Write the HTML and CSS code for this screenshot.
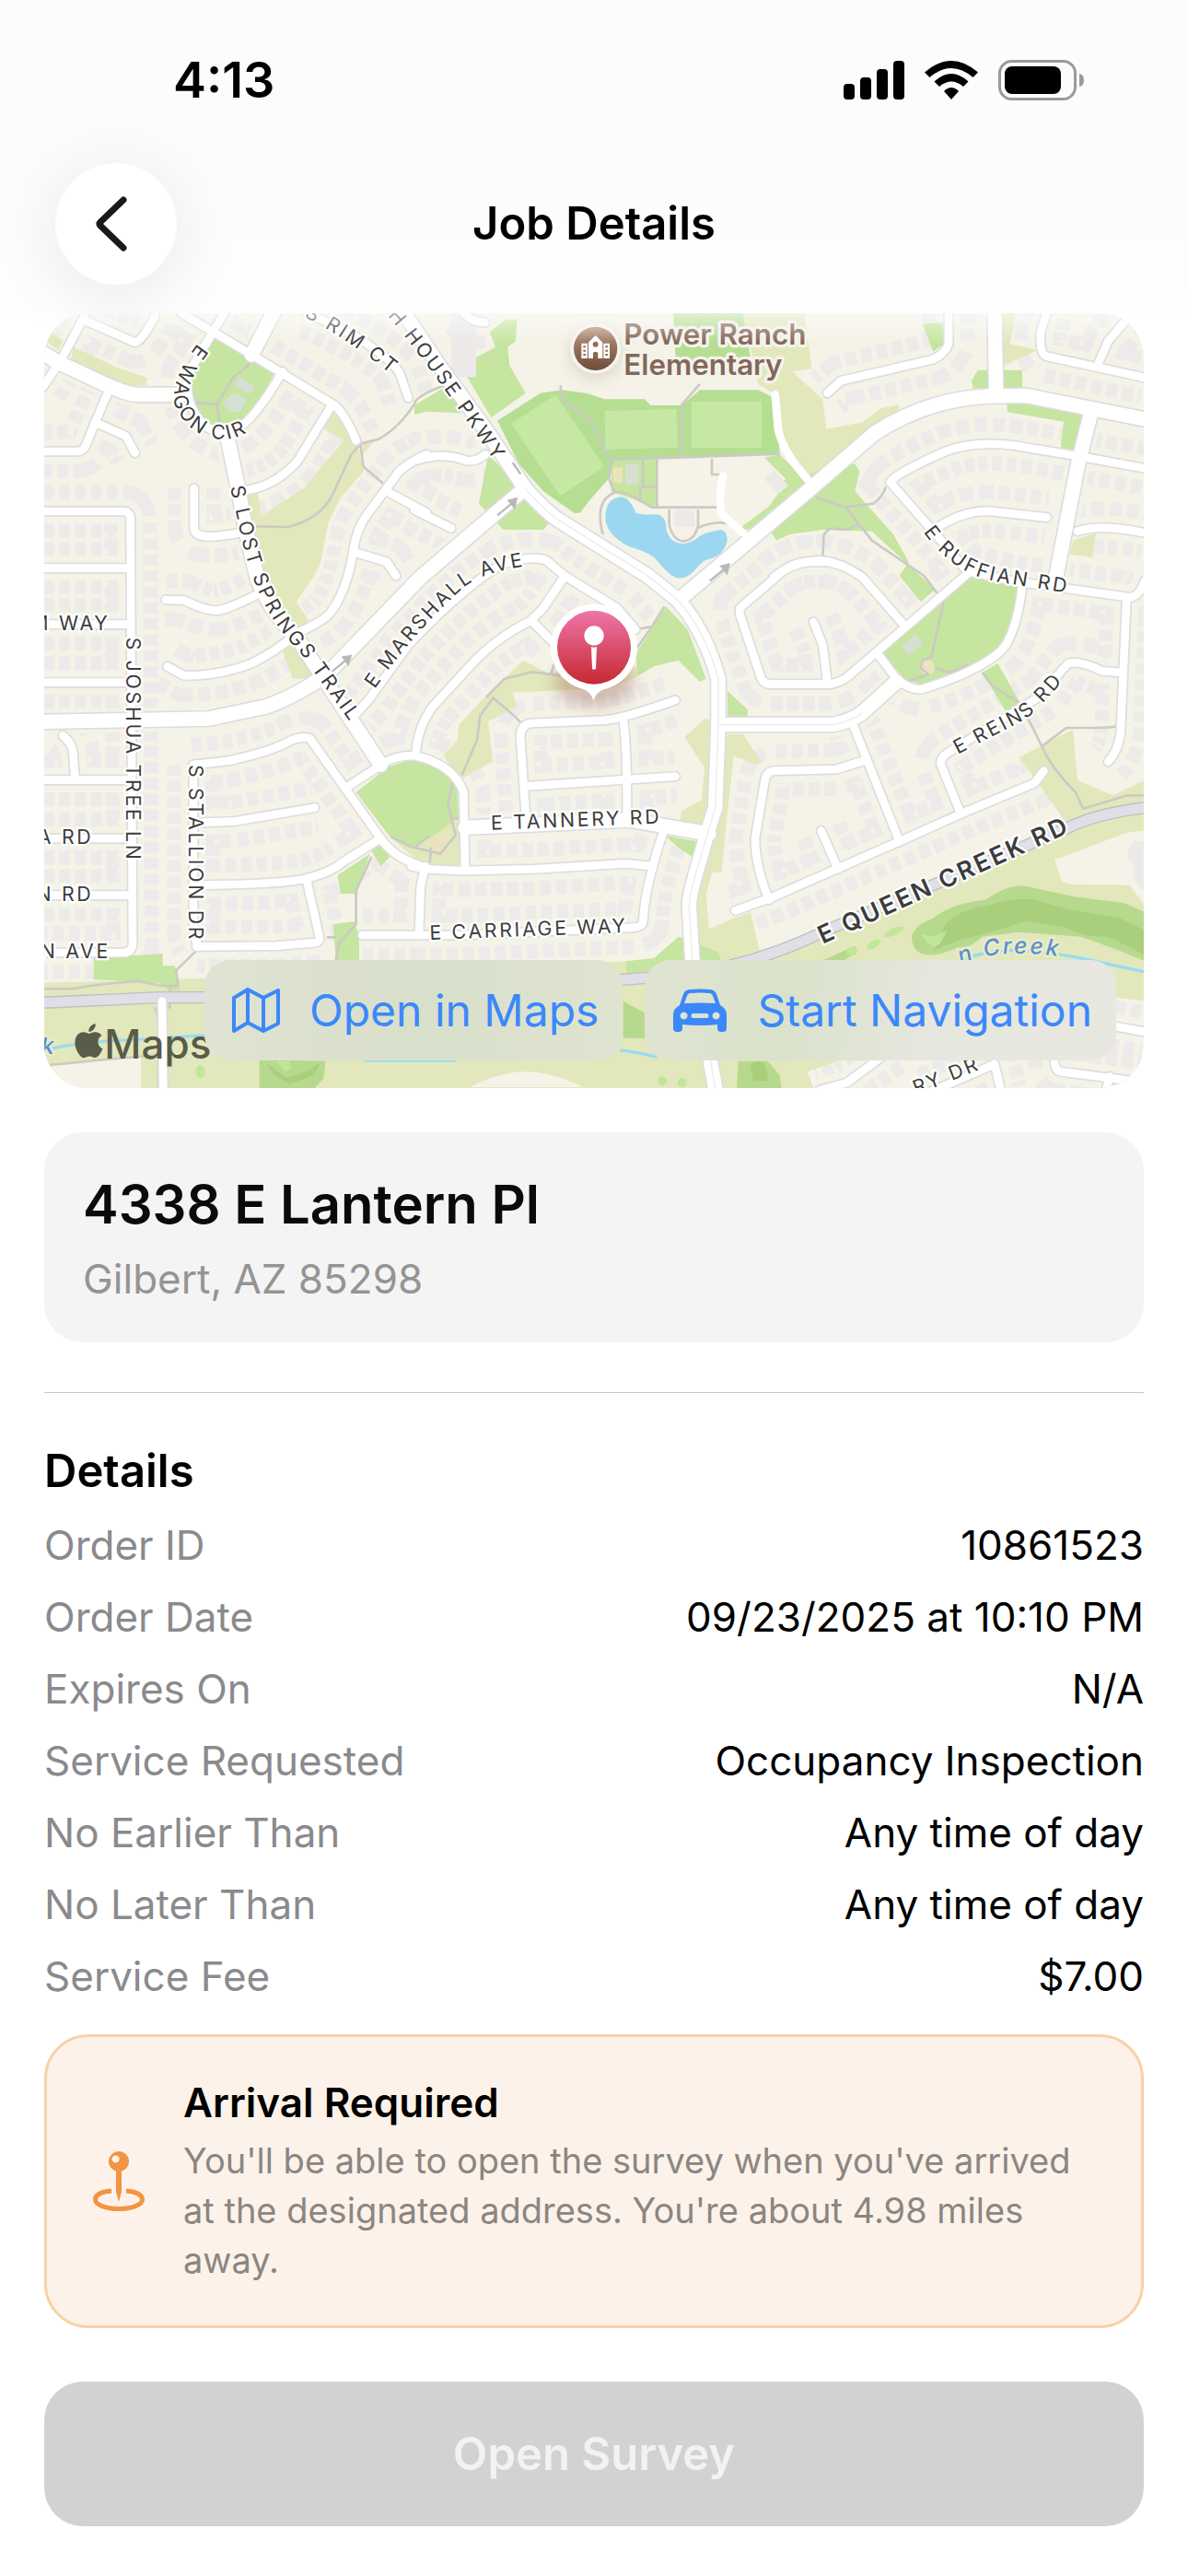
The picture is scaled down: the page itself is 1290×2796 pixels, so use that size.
FILE: index.html
```html
<!DOCTYPE html>
<html lang="en">
  <head>
    <meta charset="utf-8">
    <meta name="viewport" content="width=device-width">
    <title>Job Details</title>
    <link rel="stylesheet" href="styles.css">
  </head>
  <body>
    <div class="status-bar">
      <span class="time">4:13</span>
      <div class="status-icons">
        <svg width="66" height="42" viewBox="0 0 66 42">
          <rect x="0" y="25" width="12" height="17" rx="4"/>
          <rect x="18" y="18" width="12" height="24" rx="4"/>
          <rect x="36" y="9" width="12" height="33" rx="4"/>
          <rect x="54" y="0" width="12" height="42" rx="4"/>
        </svg>
        <svg width="58" height="42" viewBox="0 0 58 42">
          <path d="M29 42 21 33q8-8 16 0z"/>
          <path d="M10.500 22.500Q29 5.500 47.500 22.500L42 28Q29 17 16 28z"/>
          <path d="M0 12.500Q29-12.500 58 12.500L52.500 18Q29-2 5.500 18z"/>
        </svg>
        <svg width="94" height="44" viewBox="0 0 94 44">
          <rect x="1.500" y="1.500" width="82" height="41" rx="13" fill="none" stroke="#9a9a9a" stroke-width="3"/>
          <rect x="7" y="7" width="61" height="30" rx="8"/>
          <path d="M88 15q5 1 5 7t-5 7z" fill="#9a9a9a"/>
        </svg>
      </div>
    </div>
    <header class="nav-bar">
      <button class="back" aria-label="Back">
        <svg width="36" height="60" viewBox="0 0 36 60">
          <path d="M31 4 6 28q-2 2 0 4l25 24" fill="none" stroke="#1a1a1a" stroke-width="7" stroke-linecap="round"/>
        </svg>
      </button>
      <h1>Job Details</h1>
    </header>

    <main>
      <section class="map">
        <svg class="map-canvas" viewBox="0 0 3582 2523" preserveAspectRatio="xMidYMid slice">
          <defs>
            <linearGradient id="pinFill" x1="0" y1="0" x2="0" y2="1">
              <stop offset="0" stop-color="#ee76a8"/>
              <stop offset="1" stop-color="#c62832"/>
            </linearGradient>
            <linearGradient id="schoolFill" x1="0" y1="0" x2="0" y2="1">
              <stop offset="0" stop-color="#b8967a"/>
              <stop offset="1" stop-color="#6d4c3a"/>
            </linearGradient>
            <filter id="soft" x="-50%" y="-50%" width="200%" height="200%">
              <feGaussianBlur stdDeviation="26"/>
            </filter>

            <!-- small residential streets -->
            <g id="streets">
              <g transform="translate(-24 -30)">
                <path d="M20 270 80 180 155 40"/>
                <path d="M150 50 320 125Q340 125 385 40"/>
                <path d="M470 30 700 165 970 330Q1005 360 1040 445"/>
                <path d="M610 30 490 230Q480 380 600 425Q680 430 800 220"/>
                <path d="M235 280 190 385 160 460Q150 480 130 480H20"/>
                <path d="M190 385 290 430 320 485"/>
                <path d="M690 605Q780 590 850 510L960 330"/>
                <path d="M512 600V730Q515 757 560 757Q600 757 660 745"/>
                <path d="M20 675H280Q305 675 305 700L312 2080Q312 2112 280 2112H20"/>
                <path d="M20 860H300M20 1043H300M20 1232H300"/>
                <path d="M420 963 480 965Q550 1000 590 998Q630 990 710 950"/>
                <path d="M425 1180 480 1210Q600 1210 700 1170Q780 1130 850 1070Q940 1030 960 1000Q1010 930 1030 810Q1040 730 1080 680L1180 545Q1220 510 1270 490"/>
                <path d="M1040 810 1140 840 1170 885"/>
                <path d="M1140 610 1270 680"/>
                <path d="M880 30Q1100 120 1180 220L1210 305"/>
              </g>
              <g transform="translate(1206 -30)">
                <path d="M720 1060 660 990 490 885 430 835Q380 815 280 850Q150 930-20 1110L-150 1290-195 1340"/>
                <path d="M0 510Q90 480 170 510Q200 515 230 490"/>
                <path d="M0 670 120 730"/>
                <path d="M160 30Q190 60 230 60"/>
                <path d="M490 885 420 990 380 1030Q260 1090 180 1180L60 1310Q10 1380 5 1460"/>
                <path d="M380 1030 450 1100"/>
                <path d="M1350 840 1270 840Q1220 850 1200 870L1060 990V1010L1130 1220Q1140 1238 1160 1238H1350"/>
              </g>
              <g transform="translate(2376 -30)">
                <path d="M0 890Q60 840 150 835Q220 840 290 890L420 1040"/>
                <path d="M-10 1238H180Q210 1235 240 1215L630 880"/>
                <path d="M130 1035 160 1110 175 1230"/>
                <path d="M570 30V130Q560 160 520 180L220 250 175 290"/>
                <path d="M890 30 870 90Q865 165 890 170L1210 240"/>
                <path d="M1160 40 1090 120 1055 200"/>
                <path d="M1210 535 990 495 780 460Q650 445 560 480Q400 550 380 580L520 740 630 870 800 905 1160 955Q1190 955 1210 900"/>
                <path d="M530 730Q620 670 710 675L890 695"/>
                <path d="M990 740Q1060 715 1210 745"/>
                <path d="M1150 960 1130 1400Q1120 1460 1090 1490"/>
                <path d="M1135 1200 1070 1195Q1000 1160 960 1170Q930 1200 880 1270L570 1460Q540 1480 545 1500L610 1660"/>
                <path d="M810 920Q790 1080 740 1130Q660 1200 480 1255Q440 1255 400 1220L340 1140"/>
              </g>
              <g transform="translate(-24 1230)">
                <path d="M20 290H300"/>
                <path d="M85 145Q115 170 118 200L125 290"/>
                <path d="M20 480H300M20 665H300"/>
                <path d="M510 240 620 228Q760 200 830 160Q870 145 890 155L1120 480Q1160 540 1250 570"/>
                <path d="M510 240V790L525 832"/>
                <path d="M540 428 640 425 905 380"/>
                <path d="M510 632Q800 630 880 610Q960 590 1000 555L1120 480"/>
                <path d="M880 620 920 800Q925 818 900 820L780 830 520 832"/>
                <path d="M1015 310 1130 235Q1170 210 1230 210"/>
                <path d="M1060 795H1260M1265 570 1250 640 1245 790"/>
                <path d="M408 1010 412 1300"/>
              </g>
              <g transform="translate(1206 1230)">
                <path d="M0 210Q130 240 160 330L165 580"/>
                <path d="M-10 570Q20 582 160 585L390 580 690 562 770 570"/>
                <path d="M0 795H150L720 770Q745 765 745 750Q750 640 810 460"/>
                <path d="M365 440 345 150Q345 110 380 105L620 95Q680 90 850 30"/>
                <path d="M680 90Q695 200 692 420"/>
                <path d="M365 310 850 278"/>
              </g>
              <g transform="translate(2376 1230)">
                <path d="M255 100 410 490"/>
                <path d="M300 225 205 255 0 260Q-25 262-30 300L-60 480Q-60 570-15 680"/>
                <path d="M-125 715 0 670 410 490 610 400 850 300 880 260"/>
                <path d="M155 455 210 580"/>
                <path d="M380 1170 240 1275 150 1300"/>
                <path d="M500 1310 720 1215 740 1300"/>
                <path d="M915 1180Q910 1240 940 1240L1210 1275M1095 1255 1080 1310"/>
                <path d="M1100 1090 1210 1110"/>
              </g>
            </g>

            <!-- collector roads -->
            <g id="avenues">
              <path d="M-4 130 46 160 206 235Q276 265 306 265H446"/>
              <path d="M746 0 676 135"/>
              <path d="M596 400 636 590Q656 720 696 870Q736 970 826 1060L1096 1470"/>
              <path d="M1566 570 1226 860 936 1160Q856 1230 726 1280L536 1320-4 1330"/>
              <path d="M1166-10 1286 170 1446 390 1566 570Q1636 650 1686 680L1966 855 2066 935Q2156 1040 2196 1190V1340L2186 1610 2161 1690 2121 1830Q2101 1900 2101 1930L2111 2100 2186 2523"/>
              <path d="M2066 935 2486 580 2706 390Q2876 280 3076 270L3196 268 3586 345"/>
              <path d="M3096 0 3101 260"/>
              <path d="M3411 320 3366 500 3296 860"/>
              <path d="M1371 1675 1906 1650 2166 1695"/>
              <path d="M2196 1340H2566Q2626 1330 2666 1300L2776 1200"/>
            </g>
          </defs>

          <rect width="3582" height="2523" fill="#f5f3e7"/>

          <!-- houses on both sides of every street -->
          <use href="#streets" class="houses"/>
          <use href="#streets" class="kerb"/>
          <use href="#avenues" class="kerb"/>

          <g class="grass-dry">
            <path d="M0 2180 530 2165 1900 2110 2376 2100 2950 1860 3316 1640 3176 1445 3351 1355 3366 1520 3481 1570 3586 1520V2240L3256 2200 2486 2470 2506 2523H0z"/>
            <path d="M6 50 61 90 46 120 6 90zM96 110 246 180 336 210 331 235H266L86 155z"/>
            <path d="M976 415 846 570 706 660 696 585 661 590 691 850 756 960 826 1040 861 1000 821 940 876 860 901 810 926 680 966 600 1041 515 1021 420 941 320 911 375zM776 1100 826 1060 880 1190 810 1190z"/>
            <path d="M2276 0H2476L2501 180 2436 190 2536 280 2548 377 2666 355 2726 310 2781 298 2791 325 2636 440 2506 540 2416 450 2390 270 2326 230z"/>
            <path d="M3121 0H3166L3146 100 3236 120 3126 170zM3351 740 3426 715 3416 795 3341 785z"/>
            <path d="M1426 1260 1561 1130 1636 1170 1936 1150V1180L1846 1220 1526 1235 1540 1280 1446 1330 1461 1460 1350 1520 1301 1440 1346 1390 1351 1340z"/>
            <path d="M1306 1670 1356 1640V1800L1226 1790 1126 1705 1206 1740z"/>
            <path d="M2151 1320 2196 1330 2186 1610 2126 1710 2071 1660 2076 1620 2141 1585 2151 1480 2086 1380zM2226 1370H2276L2336 1460 2316 1470 2246 1440 2206 1820H2176L2156 1890 2166 2005 2246 1970 2301 1950 2331 2080 2136 2160 2086 2100 2106 1930z"/>
          </g>

          <g class="grass">
            <path d="M556 70 751 190 676 350 586 380 476 340 456 220z"/>
            <path d="M1451 60 1506 20H1541L1536 90 1510 110 1516 170 1568 260 1456 340 1356 170 1470 110z"/>
            <path d="M1206 300 1306 240 1386 280 1356 325 1246 320 1206 330z"/>
            <path d="M1446 460 1556 570 1646 680 1626 705H1496L1416 620z"/>
            <path d="M1851 480 1996 475 1991 630 1846 580zM2396 460 2466 530 2641 490 2656 515 2641 580 2766 720 2816 810 2786 855 2856 940 2901 900 2816 820 2696 710 2536 705 2426 720 2386 740 2346 680 2276 710 2266 680 2356 620 2366 570 2416 540 2346 470z"/>
            <path d="M2026 955 2096 1030 2156 1190 2136 1200 2066 1130 1986 1150 1936 1180 1926 1110z"/>
            <path d="M2861 35 2926 30 2931 100 2896 125zM3021 220 3041 185H3186L3186 245H3026zM3136 295 3276 300 3381 325 3361 450 3311 438 3321 353 3138 322z"/>
            <path d="M3016 850 3176 890 3156 1020 3096 1110 2866 1210 2806 1195 2726 1100zM3056 1170 3106 1140 3191 1290 3146 1320z"/>
            <path d="M1016 1560 1116 1480 1236 1440Q1330 1460 1346 1560L1350 1640 1300 1680 1206 1740 1126 1705z"/>
            <path d="M161 2100 386 2085V2125H426L441 2205H406L376 2180 161 2170zM956 1830 1061 1760 1016 1890H966zM941 1990 1011 1980 1026 2030V2110H951zM1066 1750 1096 1730 1126 1770 1096 1800z"/>
            <path d="M2021 1700 2126 1720 2111 1770 2066 1740zM2226 1230 2291 1290V1315H2226zM1986 2100 2066 2030 2196 2080 2206 2110 1896 2150V2110z"/>
          </g>

          <g class="grass-school">
            <path d="M1476 350 1616 260 1686 250 1766 260 1826 280H1956L1976 300H2076L2136 250H2326L2386 280 2396 460 1856 475 1846 530 1776 610 1746 650H1726L1626 580 1546 490z"/>
            <path d="M2049 0H2276L2300 140 2200 200H2060z"/>
          </g>
          <g class="pitch">
            <path d="M1521 360 1666 265 1824 500 1681 595zM1826 318 2060 312 2063 437 1828 443zM2109 288H2337V438H2109z"/>
          </g>

          <g class="golf">
            <path d="M2826 2030Q2836 1990 2896 1970Q2956 1920 3066 1910Q3136 1860 3196 1865L3356 1900 3516 1920 3586 1950V2110Q3496 2070 3376 2030L3176 2015 3056 2030Q3016 2070 2976 2065Q2906 2100 2856 2085Q2826 2070 2826 2030z"/>
            <path d="M701 2430 916 2435 911 2490 881 2523H701zM2261 2435H2356L2396 2480 2401 2523H2256zM1886 2240 1961 2280V2360H1886zM2530 2110 2640 2060 2650 2080 2600 2110z"/>
          </g>
          <g class="golf-dark">
            <path d="M2936 1990Q2976 1940 3076 1930Q3156 1900 3226 1910L3336 1940 3506 1970 3586 2010V2090L3466 2030Q3376 2030 3326 2000L3196 1980Q3076 2020 2986 2040Q2936 2060 2896 2075z"/>
            <path d="M720 2440 790 2490 850 2470 900 2440 880 2480 800 2510 750 2480zM2300 2450Q2330 2420 2350 2450L2360 2500H2310z"/>
          </g>
          <g class="golf-light">
            <path d="M2856 2020 2896 2030 2941 2010 2921 2050 2901 2065 2876 2050zM755 2435H800L805 2460 785 2470z"/>
            <ellipse cx="508" cy="2470" rx="15" ry="21"/>
            <circle cx="2014" cy="2500" r="15"/>
            <circle cx="2078" cy="2505" r="15"/>
            <ellipse cx="2630" cy="2078" rx="18" ry="14"/>
            <ellipse cx="2702" cy="2055" rx="24" ry="12" transform="rotate(-30 2702 2055)"/>
            <ellipse cx="2768" cy="2014" rx="34" ry="11" transform="rotate(-25 2768 2014)"/>
          </g>

          <g fill="#f5f3e7">
            <path d="M0 2450 316 2420V2523H0zM1386 2520Q1486 2470 1566 2470Q1656 2470 1756 2520zM3291 1780 3531 1690 3586 1685V1930L3536 1862 3346 1860 3316 1850z"/>
            <path d="M2000 475H2340L2410 560 2360 630 2266 700 2190 640H2000z"/>
          </g>

          <path class="water" d="M1828 660Q1831 600 1881 598Q1906 600 1928 650Q1941 657 1996 655Q2026 660 2026 700Q2036 750 2081 750Q2111 748 2136 725Q2166 710 2206 705Q2231 715 2223 750Q2211 785 2176 798Q2146 800 2116 840Q2086 870 2056 860Q2031 850 1996 805Q1976 780 1906 760Q1826 720 1828 660z"/>
          <g class="creek">
            <path d="M2976 2110Q3076 2070 3176 2075Q3276 2080 3376 2100L3586 2145"/>
            <path d="M-4 2400Q126 2370 306 2365L536 2350M1040 2433H1340M1876 2400 1916 2405 1996 2421"/>
          </g>

          <g fill="#ebeae9">
            <path d="M1326 0H1407V208H1326zM2053 640H2118V696H2053zM2346 540 2375 510 2424 560 2390 590zM3530 1750 3548 1718H3582V1880L3548 1840V1790L3530 1780z"/>
          </g>
          <g class="courts">
            <path d="M634 205 686 238 670 265 618 235zM580 290 618 258 662 280 640 322 600 318z"/>
            <path d="M1893 493H1936V557H1893zM2791 1085 2837 1045 2863 1073 2817 1115z"/>
          </g>
          <g fill="#ebe3bf">
            <path d="M1854 502H1884V551H1854zM1036 425 1076 415 1040 460z"/>
            <circle cx="2878" cy="1153" r="24"/>
            <circle cx="1291" cy="1727" r="34"/>
          </g>

          <g class="trail">
            <path d="M674 145 664 170 614 210 562 298 490 290M562 298 576 370"/>
            <path d="M684 694 794 696Q900 670 940 590L1000 460 1030 425 1090 410Q1160 370 1210 290M1030 425 1040 500 1105 555"/>
            <path d="M1206 290Q1230 260 1306 235M1683 235V265Q1700 300 1740 320Q1790 350 1808 400L1826 450 1856 477 2396 458M2136 230 2077 298V470M1856 477Q1820 520 1860 583Q1900 580 1930 605L1980 632H2200M1860 583Q1790 610 1820 720M1996 475V630M1950 475V565H1996M1942 565V610M2036 640V690Q2050 740 2081 742Q2120 740 2130 690V640M2130 698Q2200 670 2240 690M2175 475V525H2220"/>
            <path d="M2516 600 2612 632 2700 620Q2730 600 2742 565M2612 632 2696 740 2866 855 2930 940 2890 1120M2536 795 2540 720 2560 700 2620 705 2655 685M2890 1120 2860 1130 2856 1155 2880 1175 2810 1200M2900 1155 2950 1170 3010 1145M3056 1170 3090 1215 3180 1270 3250 1410Q3280 1480 3360 1560L3384 1613 3530 1570H3582M3250 1410 3330 1350 3450 1350 3500 1345"/>
            <path d="M1440 1250 1500 1190 1590 1168 1680 1180M1650 1175 1670 1120M1926 1030 1980 1020 1910 1120M2020 955 1980 1020M1465 1250 1420 1310 1410 1390 1360 1505M1460 1250 1530 1310 1550 1330M1330 1530 1315 1600 1340 1700 1290 1760 1206 1740 1256 1700M1260 1740 1256 1790M1326 1645H1350"/>
            <path d="M1066 1770 1016 1880V1990L960 2050 950 2110M920 2032H950M496 2075 430 2140 436 2190H380L310 2175Q200 2180 90 2200H0M1130 1705 1200 1740"/>
            <path d="M0 2450 200 2430 370 2415M372 2523V2290L360 2260M410 2200V2260H380"/>
          </g>

          <path class="creek-road-edge" d="M3586 1610Q3426 1630 3336 1675L2546 2010Q2326 2120 2076 2155Q1776 2180 1376 2210L596 2228H376L-4 2245"/>
          <path class="creek-road" d="M3586 1610Q3426 1630 3336 1675L2546 2010Q2326 2120 2076 2155Q1776 2180 1376 2210L596 2228H376L-4 2245"/>

          <use href="#streets" class="road edge"/>
          <use href="#avenues" class="road wide edge"/>
          <use href="#streets" class="road"/>
          <use href="#avenues" class="road wide"/>
          <g class="driveway">
            <path d="M2381 265 2391 380Q2406 450 2486 540M2211 530Q2196 590 2206 655L2276 715"/>
          </g>
          <path class="median" d="M1566 570Q1636 650 1686 680L1966 855 2066 935Q2156 1040 2196 1190V1340L2186 1610 2121 1830Q2101 1900 2101 1930L2111 2100 2186 2523M2196 1340H2566Q2626 1330 2666 1300"/>

          <g class="arrows">
            <path d="M936 1168 990 1124M974 1120 998 1116 990 1142z"/>
            <path d="M1476 658 1530 614M1514 610 1538 604 1532 632z"/>
            <path d="M2168 872 2222 828M2206 824 2230 818 2224 846z"/>
            <path d="M1526 486 1552 524"/>
          </g>

          <defs>
            <path id="p-wagon" d="M500 98Q405 220 428 310Q490 418 600 410Q700 390 790 270"/>
            <path id="p-lost" d="M606 566 636 700Q665 840 710 930Q750 1020 836 1108L1060 1420"/>
            <path id="p-joshua" d="M266 1055V1860"/>
            <path id="p-stallion" d="M472 1470V2130"/>
            <path id="p-rim" d="M846 12Q1000 85 1190 250"/>
            <path id="p-house" d="M1080-30Q1190 70 1520 560"/>
            <path id="p-marshall" d="M1076 1224Q1220 1020 1370 890Q1450 825 1720 806"/>
            <path id="p-ruffian" d="M2864 712Q2960 850 3110 875L3500 938"/>
            <path id="p-reins" d="M2976 1436 3200 1320Q3270 1260 3400 1100"/>
            <path id="p-tannery" d="M1456 1682 2140 1656"/>
            <path id="p-carriage" d="M1256 2040 2000 2012"/>
            <path id="p-queen" d="M2536 2054 3440 1645"/>
            <path id="p-creek" d="M2986 2120Q3140 2050 3440 2120"/>
            <path id="p-dr" d="M2840 2545 3180 2410"/>
          </defs>
          <g class="labels">
            <text><textPath href="#p-wagon">E WAGON CIR</textPath></text>
            <text><textPath href="#p-lost">S LOST SPRINGS TRAIL</textPath></text>
            <text><textPath href="#p-joshua">S JOSHUA TREE LN</textPath></text>
            <text><textPath href="#p-stallion">S STALLION DR</textPath></text>
            <text><textPath href="#p-rim">S RIM CT</textPath></text>
            <text><textPath href="#p-house">CH HOUSE PKWY</textPath></text>
            <text><textPath href="#p-marshall">E MARSHALL AVE</textPath></text>
            <text><textPath href="#p-ruffian">E RUFFIAN RD</textPath></text>
            <text><textPath href="#p-reins">E REINS RD</textPath></text>
            <text><textPath href="#p-tannery">E TANNERY RD</textPath></text>
            <text><textPath href="#p-carriage">E CARRIAGE WAY</textPath></text>
            <text><textPath href="#p-dr">RY DR</textPath></text>
            <text class="major"><textPath href="#p-queen">E QUEEN CREEK RD</textPath></text>
            <text class="river"><textPath href="#p-creek">n Creek</textPath></text>
            <text class="river" x="-10" y="2412">k</text>
            <text x="214" y="1032" text-anchor="end">M WAY</text>
            <text x="160" y="1728" text-anchor="end">A RD</text>
            <text x="160" y="1914" text-anchor="end">N RD</text>
            <text x="216" y="2100" text-anchor="end">N AVE</text>
          </g>

          <!-- school marker -->
          <circle cx="1796" cy="130" r="82" fill="#cfc6bb" filter="url(#soft)" opacity=".7"/>
          <circle cx="1796" cy="115" r="82" fill="#f6f4ee"/>
          <circle cx="1796" cy="115" r="71" fill="url(#schoolFill)"/>
          <g fill="#fff">
            <path d="M1750 98H1770V147H1750zM1822 98H1842V147H1822zM1773 95 1796 72 1819 95V147H1804V130Q1804 125 1796 125T1788 130V147H1773z"/>
          </g>
          <g fill="#8f6f58">
            <circle cx="1796" cy="101" r="9"/>
            <path d="M1756 106h8v6h-8zM1756 119h8v6h-8zM1756 132h8v6h-8zM1828 106h8v6h-8zM1828 119h8v6h-8zM1828 132h8v6h-8z"/>
          </g>
          <g class="poi">
            <text x="1888" y="101">Power Ranch</text>
            <text x="1888" y="201">Elementary</text>
          </g>

          <!-- job pin -->
          <ellipse cx="1791" cy="1200" rx="130" ry="80" fill="#a06a5c" filter="url(#soft)" opacity=".4"/>
          <path d="M1755 1220Q1785 1235 1789 1258 1793 1235 1827 1220z" fill="#fff" stroke="#fff" stroke-width="4"/>
          <circle cx="1791" cy="1088" r="141" fill="#fff"/>
          <circle cx="1791" cy="1088" r="120" fill="url(#pinFill)"/>
          <circle cx="1791" cy="1050" r="32" fill="#fff"/>
          <path d="M1782 1086Q1791 1090 1800 1086L1797 1158Q1791 1163 1785 1158z" fill="#fff"/>

          <g class="attribution">
            <path transform="translate(90 2314) scale(4.600)" d="M12.152 6.896c-.948 0-2.415-1.078-3.960-1.040-2.040.027-3.910 1.183-4.961 3.014-2.117 3.675-.546 9.103 1.519 12.090 1.013 1.454 2.208 3.090 3.792 3.039 1.520-.065 2.090-.987 3.935-.987 1.831 0 2.350.987 3.960.948 1.637-.026 2.676-1.480 3.676-2.948 1.156-1.688 1.636-3.325 1.662-3.415-.039-.013-3.182-1.221-3.220-4.857-.026-3.040 2.480-4.494 2.597-4.559-1.429-2.090-3.623-2.324-4.390-2.376-2-.156-3.675 1.090-4.610 1.090zM15.530 3.830c.843-1.012 1.400-2.427 1.245-3.830-1.207.052-2.662.805-3.532 1.818-.780.896-1.454 2.338-1.273 3.714 1.338.104 2.715-.688 3.559-1.701"/>
            <text x="196" y="2426">Maps</text>
          </g>
        </svg>
        <div class="map-actions">
          <button class="map-button">
            <svg width="52" height="50" viewBox="0 0 52 50">
              <path d="M2 11 17 2 34 11 50 3V39L34 47 17 38 2 47zM17 2V38M34 11V47" fill="none" stroke="currentColor" stroke-width="4" stroke-linejoin="round"/>
            </svg>
            Open in Maps
          </button>
          <button class="map-button light">
            <svg width="60" height="48" viewBox="0 0 60 48">
              <path fill="currentColor" fill-rule="evenodd" d="M8 18 12 6Q14 1 20 1 30 0 40 1 46 1 48 6L52 18Q59 22 59 28V43Q59 47 55 47H53Q49 47 49 43V39Q30 41 11 39V43Q11 47 7 47H5Q1 47 1 43V28Q1 22 8 18zM13 16Q30 15 47 16L44 8Q43 5 40 5 30 4 20 5 17 5 16 8zM12.500 25.500a4 4 0 1 0 .1 0zM47.500 25.500a4 4 0 1 0 .1 0zM23 27Q20.500 27 20.500 29.500T23 32H37Q39.500 32 39.500 29.500T37 27z"/>
            </svg>
            Start Navigation
          </button>
        </div>
      </section>

      <section class="address">
        <h2>4338 E Lantern Pl</h2>
        <p>Gilbert, AZ 85298</p>
      </section>

      <hr>

      <section class="details">
        <h3>Details</h3>
        <dl>
          <div class="row"><dt>Order ID</dt><dd>10861523</dd></div>
          <div class="row"><dt>Order Date</dt><dd>09/23/2025 at 10:10 PM</dd></div>
          <div class="row"><dt>Expires On</dt><dd>N/A</dd></div>
          <div class="row"><dt>Service Requested</dt><dd>Occupancy Inspection</dd></div>
          <div class="row"><dt>No Earlier Than</dt><dd>Any time of day</dd></div>
          <div class="row"><dt>No Later Than</dt><dd>Any time of day</dd></div>
          <div class="row"><dt>Service Fee</dt><dd>$7.00</dd></div>
        </dl>
      </section>

      <section class="notice">
        <svg width="56" height="66" viewBox="0 0 56 66">
          <path d="M20 43C8 44 2.500 48 2.500 52.500 2.500 58 14 62.500 28 62.500S53.500 58 53.500 52.500C53.500 48 48 44 36 43" fill="none" stroke="#f29444" stroke-width="5"/>
          <path fill="#f29444" fill-rule="evenodd" d="M28 0a11 11 0 0 1 3 21.600V44L28 55 25 44V21.600A11 11 0 0 1 28 0zM24.500 4.500a4 4 0 1 0 .1 0z"/>
        </svg>
        <div>
          <h4>Arrival Required</h4>
          <p>You'll be able to open the survey when you've arrived at the designated address. You're about 4.98 miles away.</p>
        </div>
      </section>

      <button class="open-survey" disabled>Open Survey</button>
    </main>
  </body>
</html>
```

FILE: styles.css
```css
* {
  box-sizing: border-box;
}
body {
  margin: 0;
  background: #fff;
  color: #000;
  font-family: Inter, "Liberation Sans", sans-serif;
  font-size: 44px;
  line-height: 54px;
}
h1,
h2,
h3,
h4,
p,
dl,
dd {
  margin: 0;
}
button {
  border: none;
  font-family: inherit;
  cursor: pointer;
}

/* Top bars */
.status-bar {
  display: flex;
  justify-content: space-between;
  align-items: center;
  padding: 56px 112px 59px 188px;
  background: #fcfcfc;
}
.time {
  font-size: 54px;
  line-height: 62px;
  font-weight: 600;
}
.status-icons {
  display: flex;
  align-items: center;
  gap: 22px;
}
.nav-bar {
  display: grid;
  grid-template-columns: 132px 1fr 132px;
  align-items: center;
  padding: 0 60px 31px;
  background: linear-gradient(#fcfcfc, #fefefe);
}
.nav-bar h1 {
  font-size: 49px;
  line-height: 62px;
  font-weight: 600;
  text-align: center;
}
.back {
  display: flex;
  align-items: center;
  justify-content: center;
  height: 132px;
  padding: 0 10px 0 0;
  border-radius: 50%;
  background: #fff;
  box-shadow: 0 12px 80px rgba(0, 0, 0, 0.09);
}

main {
  padding: 0 48px 53px;
}

/* Map */
.map {
  position: relative;
  overflow: hidden;
  border-radius: 48px;
}
.map::before {
  content: "";
  position: absolute;
  top: 0;
  left: 0;
  right: 0;
  height: 32px;
  background: linear-gradient(rgba(252, 252, 252, 0.6), rgba(252, 252, 252, 0));
}
.map-canvas {
  display: block;
  width: 100%;
  font-family: Inter, "Liberation Sans", sans-serif;
}
.houses {
  fill: none;
  stroke: #ecebe9;
  stroke-width: 172px;
  stroke-dasharray: 36 16;
}
.kerb {
  fill: none;
  stroke: #f5f3e7;
  stroke-width: 80px;
}
.road {
  fill: none;
  stroke: #fff;
  stroke-width: 26px;
  stroke-linecap: round;
  stroke-linejoin: round;
}
.road.edge {
  stroke: #dcdddf;
  stroke-width: 36px;
}
.road.wide {
  stroke-width: 46px;
}
.road.wide.edge {
  stroke-width: 56px;
}
.driveway {
  fill: none;
  stroke: #fff;
  stroke-width: 26px;
  stroke-linecap: round;
}
.median {
  fill: none;
  stroke: #efefef;
  stroke-width: 5px;
}
.creek-road,
.creek-road-edge {
  fill: none;
  stroke: #dfe0e6;
  stroke-width: 32px;
}
.creek-road-edge {
  stroke: #bebfc5;
  stroke-width: 40px;
}
.trail {
  fill: none;
  stroke: #cbcac4;
  stroke-width: 8px;
  stroke-linejoin: round;
}
.grass {
  fill: #c5e5a0;
}
.grass-dry {
  fill: #e2e8bb;
}
.grass-school {
  fill: #b5de92;
}
.pitch {
  fill: #c7e8a4;
}
.golf {
  fill: #b7d98e;
}
.golf-dark {
  fill: #a9cf7d;
}
.golf-light {
  fill: #bfe797;
}
.water {
  fill: #9bd7f1;
}
.creek {
  fill: none;
  stroke: #9bdaf4;
  stroke-width: 10px;
}
.courts {
  fill: #d6dfd1;
}
.arrows {
  fill: #b9b9b9;
  stroke: #b9b9b9;
  stroke-width: 7px;
}
.labels {
  fill: #3c3c3c;
  stroke: #fff;
  stroke-width: 14px;
  stroke-linejoin: round;
  paint-order: stroke;
  font-size: 64px;
  letter-spacing: 8px;
}
.labels .major {
  font-size: 80px;
  font-weight: 600;
}
.labels .river {
  fill: #5b8fd0;
  stroke: #e9edca;
  font-size: 74px;
  font-weight: 500;
  font-style: italic;
}
.poi {
  fill: #84675a;
  stroke: #f3f3ea;
  stroke-width: 20px;
  stroke-linejoin: round;
  paint-order: stroke;
  font-size: 94px;
  font-weight: 600;
}
.attribution {
  fill: #5a5b49;
  font-size: 132px;
  font-weight: 500;
}
.map-actions {
  position: absolute;
  right: 30px;
  bottom: 30px;
  display: flex;
  gap: 24px;
}
.map-button {
  display: flex;
  align-items: center;
  gap: 32px;
  padding: 24px 26px 24px 30px;
  border-radius: 28px;
  background: linear-gradient(90deg, #e0e3d3, #d8dfca 50%, #dfe4d0);
  color: #3b88fb;
  font-size: 48px;
  line-height: 61px;
}
.map-button.light {
  background: linear-gradient(100deg, #e0e4d3, #d9e2ca 30%, #e6e7de 60%, #e8e8e1);
}

/* Address card */
.address {
  margin-top: 48px;
  padding: 42px;
  border-radius: 42px;
  background: #f4f4f4;
}
.address h2 {
  font-size: 58px;
  line-height: 72px;
  font-weight: 600;
  color: #0a0a0a;
}
.address p {
  margin-top: 18px;
  color: #949494;
}
hr {
  height: 1px;
  margin: 54px 0;
  border: none;
  background: #c8c8c8;
}

/* Details list */
.details h3 {
  margin-bottom: 22px;
  font-size: 49px;
  line-height: 62px;
  font-weight: 600;
}
.details dl {
  display: flex;
  flex-direction: column;
  gap: 24px;
}
.row {
  display: flex;
  justify-content: space-between;
}
.row dt {
  color: #8a8a8d;
}

/* Arrival notice */
.notice {
  display: flex;
  align-items: center;
  gap: 42px;
  margin-top: 36px;
  padding: 44px 50px;
  border: 3px solid #f8d1a7;
  border-radius: 48px;
  background: #fdf2e9;
}
.notice svg {
  flex: none;
}
.notice h4 {
  font-size: 44px;
  font-weight: 600;
}
.notice p {
  margin-top: 9px;
  font-size: 38px;
  color: #8b8682;
}

.open-survey {
  display: block;
  width: 100%;
  margin-top: 58px;
  padding: 48px;
  border-radius: 42px;
  background: #d2d2d2;
  color: #f2f2f2;
  font-size: 49px;
  line-height: 61px;
  font-weight: 600;
}
```
